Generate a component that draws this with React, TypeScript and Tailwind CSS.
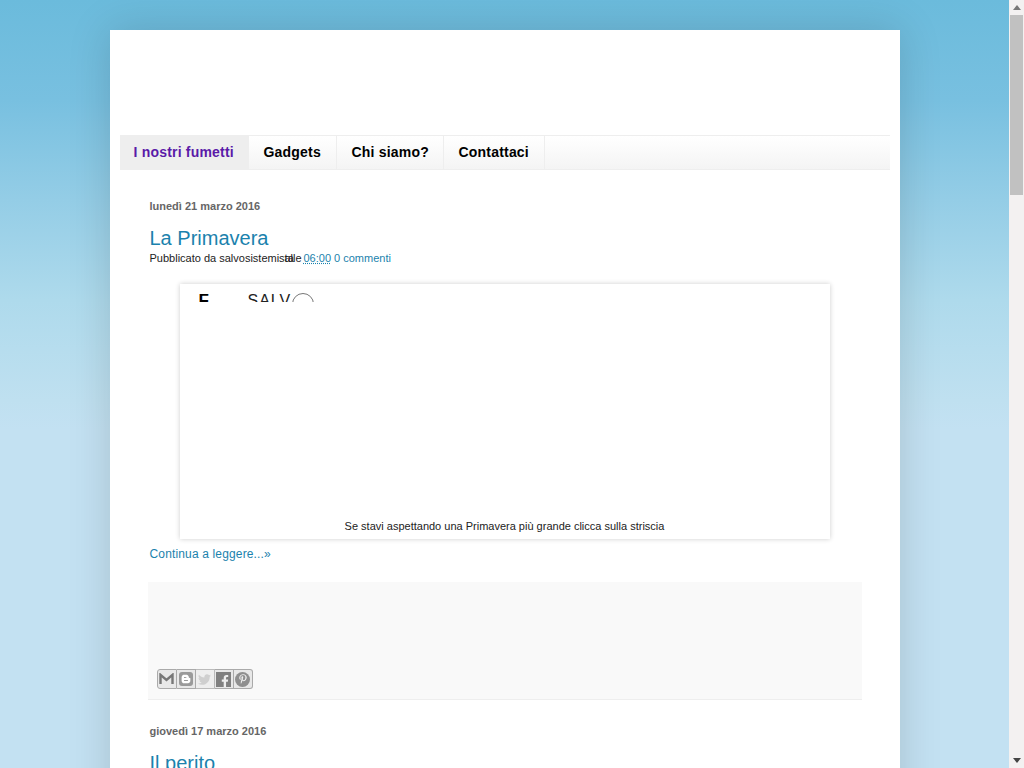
import { FaBloggerB, FaFacebookF, FaPinterestP, FaTwitter } from 'react-icons/fa';

const tabs = [
  { label: 'I nostri fumetti', width: 'w-[129px]', active: true },
  { label: 'Gadgets', width: 'w-[88px]' },
  { label: 'Chi siamo?', width: 'w-[107px]' },
  { label: 'Contattaci', width: 'w-[101px]' },
];

function ShareButtons() {
  return (
    <div className="flex">
      <a className="w-5 h-5 border border-[#aaa] rounded-l-[3px] bg-[#e8e8e8] flex items-center justify-center">
        <svg width="15" height="12" viewBox="0 0 16 13">
          <path d="M1.5 12V2l6.5 5.5L14.5 2v10" fill="none" stroke="#777" strokeWidth="2.6" />
        </svg>
      </a>
      <a className="w-[19px] h-5 border border-l-0 border-[#aaa] bg-[#e8e8e8] flex items-center justify-center">
        <span className="w-[14px] h-[14px] rounded-[3px] bg-[#9a9a9a] flex items-center justify-center text-white">
          <FaBloggerB size={10} />
        </span>
      </a>
      <a className="w-[19px] h-5 border border-l-0 border-[#bbb] bg-[#eee] flex items-center justify-center text-[#cfcfcf]">
        <FaTwitter size={13} />
      </a>
      <a className="w-[19px] h-5 border border-l-0 border-[#aaa] bg-[#e8e8e8] flex items-center justify-center">
        <span className="w-[15px] h-[15px] bg-[#808080] flex items-end justify-end text-[#eee]">
          <FaFacebookF size={12} />
        </span>
      </a>
      <a className="w-[19px] h-5 border border-l-0 border-[#aaa] rounded-r-[3px] bg-[#e8e8e8] flex items-center justify-center">
        <span className="w-[15px] h-[15px] rounded-full bg-[#8f8f8f] flex items-center justify-center text-[#eee]">
          <FaPinterestP size={10} />
        </span>
      </a>
    </div>
  );
}

export default function App() {
  return (
    <div className="h-[768px] overflow-hidden flex font-['Liberation_Sans',Arial,sans-serif] bg-[#c3e1f2]">
      <div className="flex-1 h-[768px] overflow-hidden pt-[30px] bg-[linear-gradient(to_bottom,#6bbbdc_0px,#78c0e0_100px,#94cde6_200px,#aedaec_300px,#bfe0f0_400px,#c3e1f2_430px,#c3e1f2_768px)]">
        <div className="w-[790px] h-[800px] mx-auto bg-white shadow-[0_0_40px_rgba(0,0,0,0.15)] px-[10px]">
          <div className="h-[105px]" />

          <div className="h-[35px] flex border-y border-[#eee] bg-[linear-gradient(to_bottom,#ffffff,#f4f4f4)]">
            {tabs.map(t => (
              <a
                key={t.label}
                className={`h-full ${t.width} flex items-center border-r border-[#eee] text-[14px] font-bold tracking-[0.2px] whitespace-nowrap ${t.active ? 'pl-[14px] bg-[#eee] text-[#5a1aa8]' : 'pl-[15px] text-black'}`}
              >
                {t.label}
              </a>
            ))}
          </div>

          <div className="px-[30px]">
            <h2 className="mt-[30px] text-[11px] leading-[13px] font-bold text-[#666]">lunedì 21 marzo 2016</h2>
            <h3 className="mt-[13px] text-[20px] leading-[24px] text-[#1b82ad]">La Primavera</h3>
            <div className="mt-[2px] h-[13px] flex text-[11px] leading-[13px] text-[#222]">
              <span className="w-[135px] whitespace-nowrap">Pubblicato da salvosistemista</span>
              <span className="w-[19px]">alle</span>
              <a className="text-[#1b82ad] underline decoration-dotted">06:00</a>
              <a className="ml-[3px] text-[#1b82ad]">0 commenti</a>
            </div>

            <div className="mt-[19px] ml-[30px] w-[650px] h-[255px] bg-white shadow-[0_0_5px_rgba(0,0,0,0.2)] flex flex-col items-center">
              <div className="w-full h-[18px] overflow-hidden relative">
                <span className="absolute left-[19px] top-[7px] text-[17px] leading-[20px] font-bold text-black">F</span>
                <span className="absolute left-[68px] top-[7px] text-[16px] leading-[20px] tracking-[1px] text-[#222]">SALV</span>
                <span className="absolute left-[112px] top-[9px] w-[22px] h-[22px] rounded-full border border-[#777]" />
                <span className="absolute left-[134px] top-[12px] h-[2px] overflow-hidden">
                  <span className="block -mt-[3px] text-[14px] leading-[20px] tracking-[9px] text-[#ccc]">SALVOS</span>
                </span>
              </div>
              <div className="flex-1" />
              <p className="pb-[6px] text-[11px] leading-[13px] text-[#222]">Se stavi aspettando una Primavera più grande clicca sulla striscia</p>
            </div>

            <a className="block mt-[8px] text-[12px] leading-[14px] tracking-[0.15px] text-[#1b82ad]">Continua a leggere...»</a>

            <div className="mt-[21px] -mx-[2px] w-[714px] h-[118px] bg-[#f9f9f9] border-b border-[#eee] flex items-end px-[9px] pb-[10px]">
              <ShareButtons />
            </div>

            <h2 className="mt-[25px] text-[11px] leading-[13px] font-bold text-[#666]">giovedì 17 marzo 2016</h2>
            <h3 className="mt-[13px] text-[20px] leading-[24px] text-[#1b82ad]">Il perito</h3>
          </div>
        </div>
      </div>

      <div className="w-[15px] h-[768px] bg-[#f3f1f1] flex flex-col items-center">
        <div className="h-[15px] w-full flex items-center justify-center">
          <span className="border-x-[4px] border-x-transparent border-b-[5px] border-b-[#777]" />
        </div>
        <div className="h-[180px] w-[13px] bg-[#c1c1c1]" />
        <div className="flex-1" />
        <div className="h-[15px] w-full flex items-center justify-center">
          <span className="border-x-[4px] border-x-transparent border-t-[5px] border-t-[#444]" />
        </div>
      </div>
    </div>
  );
}
